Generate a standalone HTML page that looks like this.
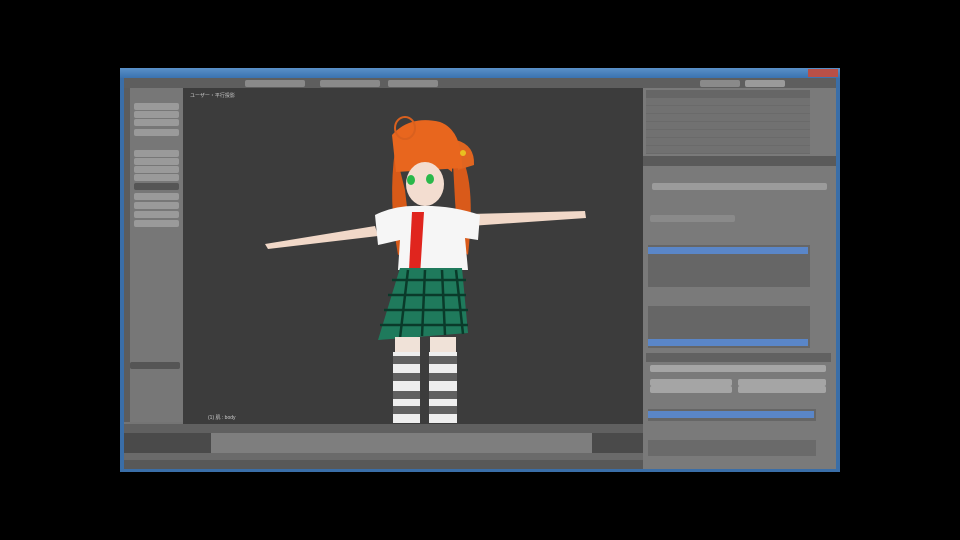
<!DOCTYPE html>
<html><head><meta charset="utf-8"><style>
body{margin:0;width:960px;height:540px;background:#000;overflow:hidden;position:relative;font-family:"Liberation Sans","Noto Sans CJK JP",sans-serif;}
.a{position:absolute;}
.btn{position:absolute;background:#9a9a9a;border-radius:2px;height:7px;}
</style></head><body>
<div class="a" style="left:120px;top:68px;width:720px;height:404px;background:#747474;"></div>
<div class="a" style="left:120px;top:68px;width:720px;height:10px;background:linear-gradient(#5a90c8,#3a72b0);"></div>
<div class="a" style="left:808px;top:69px;width:30px;height:8px;background:#b85048;"></div>
<div class="a" style="left:120px;top:78px;width:720px;height:10px;background:#5e5e5e;"></div>
<div class="btn" style="left:245px;top:80px;width:60px;background:#8a8a8a"></div>
<div class="btn" style="left:320px;top:80px;width:60px;background:#8a8a8a"></div>
<div class="btn" style="left:388px;top:80px;width:50px;background:#8a8a8a"></div>
<div class="btn" style="left:700px;top:80px;width:40px;background:#8a8a8a"></div>
<div class="btn" style="left:745px;top:80px;width:40px;background:#9a9a9a"></div>
<div class="a" style="left:120px;top:78px;width:4px;height:394px;background:#3a6ea8;"></div>
<div class="a" style="left:836px;top:78px;width:4px;height:394px;background:#3a6ea8;"></div>
<!-- left panel -->
<div class="a" style="left:124px;top:88px;width:6px;height:334px;background:#5c5c5c;"></div>
<div class="a" style="left:130px;top:88px;width:53px;height:334px;background:#777;"></div>
<div class="btn" style="left:134px;top:103px;width:45px"></div>
<div class="btn" style="left:134px;top:111px;width:45px"></div>
<div class="btn" style="left:134px;top:119px;width:45px"></div>
<div class="btn" style="left:134px;top:129px;width:45px"></div>
<div class="btn" style="left:134px;top:150px;width:45px"></div>
<div class="btn" style="left:134px;top:158px;width:45px"></div>
<div class="btn" style="left:134px;top:166px;width:45px"></div>
<div class="btn" style="left:134px;top:174px;width:45px"></div>
<div class="btn" style="left:134px;top:183px;width:45px;background:#555"></div>
<div class="btn" style="left:134px;top:193px;width:45px"></div>
<div class="btn" style="left:134px;top:202px;width:45px"></div>
<div class="btn" style="left:134px;top:211px;width:45px"></div>
<div class="btn" style="left:134px;top:220px;width:45px"></div>
<div class="btn" style="left:130px;top:362px;width:50px;background:#555"></div>
<!-- viewport -->
<div class="a" style="left:183px;top:88px;width:460px;height:336px;background:#3c3c3c;"></div>
<div class="a" style="left:190px;top:92px;font-size:5px;color:#ccc">ユーザー・平行投影</div>
<div class="a" style="left:208px;top:414px;font-size:5px;color:#ccc">(1) 肌 : body</div>
<svg class="a" style="left:183px;top:88px" width="460" height="336" viewBox="183 88 460 336">
<path d="M265 244 L375 226 L378 236 L268 249 Z" fill="#f1d8c8"/>
<path d="M470 214 L585 211 L586 218 L470 226 Z" fill="#f1d8c8"/>
<path d="M395 150 Q388 200 398 255 L412 250 L405 190 Z" fill="#d85a18"/>
<path d="M452 145 Q478 165 468 255 L458 245 L455 200 Z" fill="#d95a1a"/>
<path d="M456 140 Q475 145 474 165 L458 170 Z" fill="#e06520"/>
<path d="M392 135 Q410 115 440 122 Q462 130 462 168 L396 172 Z" fill="#e8661e"/>
<ellipse cx="405" cy="128" rx="10" ry="11" fill="none" stroke="#d9601e" stroke-width="2"/>
<ellipse cx="425" cy="184" rx="19" ry="22" fill="#f3ddd0"/>
<path d="M400 170 Q425 150 452 172 L452 158 Q425 140 400 160 Z" fill="#e8661e"/>
<ellipse cx="411" cy="180" rx="4" ry="5" fill="#2ab84a"/>
<ellipse cx="430" cy="179" rx="4" ry="5" fill="#2ab84a"/>
<circle cx="463" cy="153" r="3" fill="#e8c020"/>
<path d="M375 215 Q395 205 420 206 Q450 205 480 215 L478 240 L465 238 L468 270 L398 270 L400 240 L378 245 Z" fill="#f6f6f6"/>
<path d="M412 212 L424 212 L420 276 L414 280 L409 270 Z" fill="#e0251e"/>
<path d="M400 268 L462 268 L468 333 L378 340 Z" fill="#1f7a5c"/>
<path d="M392 280 L466 280 M388 295 L466 295 M384 310 L468 310 M380 325 L468 325 M408 270 L400 338 M425 270 L422 336 M442 270 L445 335 M456 270 L463 334" stroke="#0a3a2a" stroke-width="2.5"/>
<rect x="395" y="337" width="25" height="22" fill="#f0e2d8"/>
<rect x="430" y="337" width="26" height="22" fill="#f0e2d8"/>
<rect x="393" y="352" width="27" height="71" fill="#eeeeee"/>
<rect x="429" y="352" width="28" height="71" fill="#eeeeee"/>
<path d="M393 360h27M393 377h27M393 395h27M393 410h27M429 360h28M429 377h28M429 395h28M429 410h28" stroke="#606060" stroke-width="8"/>
</svg>
<!-- timeline -->
<div class="a" style="left:124px;top:424px;width:519px;height:9px;background:#606060;"></div>
<div class="a" style="left:124px;top:433px;width:519px;height:20px;background:#7e7e7e;"></div>
<div class="a" style="left:124px;top:433px;width:87px;height:20px;background:#4a4a4a;"></div>
<div class="a" style="left:592px;top:433px;width:51px;height:20px;background:#4a4a4a;"></div>
<div class="a" style="left:124px;top:453px;width:519px;height:7px;background:#6a6a6a;"></div>
<div class="a" style="left:124px;top:460px;width:519px;height:9px;background:#585858;"></div>
<div class="a" style="left:120px;top:469px;width:720px;height:3px;background:#3a6ea8;"></div>
<!-- right panel -->
<div class="a" style="left:643px;top:88px;width:193px;height:381px;background:#7a7a7a;"></div>
<div class="a" style="left:646px;top:90px;width:164px;height:8px;background:#666;"></div>
<div class="a" style="left:646px;top:98px;width:164px;height:56px;background:repeating-linear-gradient(#717171 0 7px,#6a6a6a 7px 8px);"></div>
<div class="a" style="left:643px;top:156px;width:193px;height:10px;background:#5a5a5a;"></div>
<div class="btn" style="left:652px;top:183px;width:175px;background:#9b9b9b"></div>
<div class="btn" style="left:650px;top:215px;width:85px;background:#8a8a8a"></div>
<div class="a" style="left:648px;top:245px;width:162px;height:42px;background:#666;"></div>
<div class="a" style="left:648px;top:247px;width:160px;height:7px;background:#5a86c8;"></div>
<div class="a" style="left:648px;top:306px;width:162px;height:42px;background:#666;"></div>
<div class="a" style="left:648px;top:339px;width:160px;height:7px;background:#5a86c8;"></div>
<div class="a" style="left:646px;top:353px;width:185px;height:9px;background:#616161;"></div>
<div class="btn" style="left:650px;top:365px;width:176px;background:#a5a5a5"></div>
<div class="btn" style="left:650px;top:379px;width:82px;background:#a5a5a5"></div>
<div class="btn" style="left:650px;top:386px;width:82px;background:#a5a5a5"></div>
<div class="btn" style="left:738px;top:379px;width:88px;background:#a5a5a5"></div>
<div class="btn" style="left:738px;top:386px;width:88px;background:#a5a5a5"></div>
<div class="a" style="left:648px;top:409px;width:168px;height:12px;background:#666;"></div>
<div class="a" style="left:648px;top:411px;width:166px;height:7px;background:#5a86c8;"></div>
<div class="a" style="left:648px;top:440px;width:168px;height:16px;background:#6a6a6a;"></div>
</body></html>
